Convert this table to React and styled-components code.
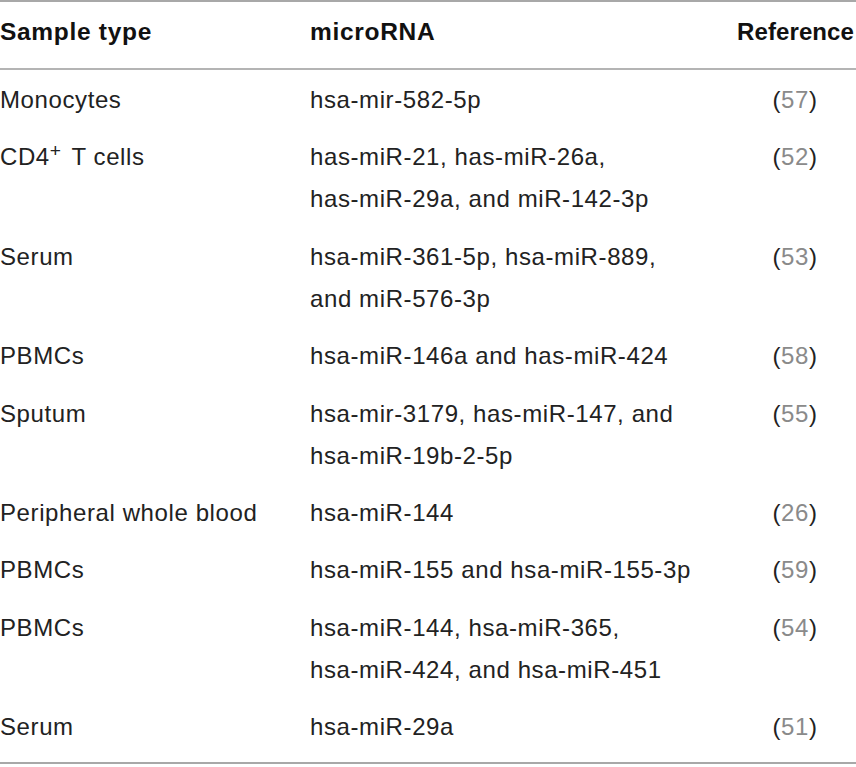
import styled, { createGlobalStyle } from "styled-components";

const GlobalStyle = createGlobalStyle`
  html, body {
    margin: 0;
    padding: 0;
    background: #ffffff;
  }
  body {
    font-family: "Liberation Sans", Arial, sans-serif;
    color: #222;
  }
`;

const StyledTable = styled.table`
  width: 856px;
  border-collapse: collapse;
  border-top: 2px solid #a8a8a8;
  border-bottom: 2px solid #a8a8a8;
  table-layout: fixed;
`;

const StyledHeadRow = styled.tr`
  border-bottom: 2px solid #b4b4b4;
`;

const StyledHeadCell = styled.th`
  padding: ${({ $align }) => ($align === "right" ? "9px 2px 15px 0" : "9px 0 15px")};
  font-size: ${({ $align }) => ($align === "right" ? "24px" : "24.5px")};
  font-weight: bold;
  letter-spacing: ${({ $align }) => ($align === "right" ? "0.1px" : "0.7px")};
  line-height: 42px;
  color: #111;
  text-align: ${({ $align }) => $align || "left"};
  white-space: nowrap;
`;

const StyledCell = styled.td`
  padding: ${({ $last }) => ($last ? "9px 0 14px" : "9px 0 6.4px")};
  font-size: 24px;
  letter-spacing: 0.6px;
  line-height: 42px;
  vertical-align: top;
  text-align: ${({ $align }) => $align || "left"};
  white-space: nowrap;
`;

const StyledSup = styled.sup`
  font-size: 0.8em;
  line-height: 0;
  vertical-align: 0.45em;
  margin-right: 3px;
`;

const StyledRef = styled.span`
  color: #8a8a8a;
`;

const rows = [
  { sample: "Monocytes", rna: ["hsa-mir-582-5p"], ref: "57" },
  {
    sample: (
      <>
        CD4<StyledSup>+</StyledSup> T cells
      </>
    ),
    rna: ["has-miR-21, has-miR-26a,", "has-miR-29a, and miR-142-3p"],
    ref: "52",
  },
  { sample: "Serum", rna: ["hsa-miR-361-5p, hsa-miR-889,", "and miR-576-3p"], ref: "53" },
  { sample: "PBMCs", rna: ["hsa-miR-146a and has-miR-424"], ref: "58" },
  { sample: "Sputum", rna: ["hsa-mir-3179, has-miR-147, and", "hsa-miR-19b-2-5p"], ref: "55" },
  { sample: "Peripheral whole blood", rna: ["hsa-miR-144"], ref: "26" },
  { sample: "PBMCs", rna: ["hsa-miR-155 and hsa-miR-155-3p"], ref: "59" },
  {
    sample: "PBMCs",
    rna: ["hsa-miR-144, hsa-miR-365,", "hsa-miR-424, and hsa-miR-451"],
    ref: "54",
  },
  { sample: "Serum", rna: ["hsa-miR-29a"], ref: "51" },
];

const App = () => {
  return (
    <>
      <GlobalStyle />
      <StyledTable>
        <colgroup>
          <col style={{ width: "310px" }} />
          <col />
          <col style={{ width: "122px" }} />
        </colgroup>
        <thead>
          <StyledHeadRow>
            <StyledHeadCell>Sample type</StyledHeadCell>
            <StyledHeadCell>microRNA</StyledHeadCell>
            <StyledHeadCell $align="right">Reference</StyledHeadCell>
          </StyledHeadRow>
        </thead>
        <tbody>
          {rows.map((row, i) => {
            const last = i === rows.length - 1;
            return (
              <tr key={i}>
                <StyledCell $last={last}>{row.sample}</StyledCell>
                <StyledCell $last={last}>
                  {row.rna.map((line, j) => (
                    <div key={j}>{line}</div>
                  ))}
                </StyledCell>
                <StyledCell $last={last} $align="center">
                  (<StyledRef>{row.ref}</StyledRef>)
                </StyledCell>
              </tr>
            );
          })}
        </tbody>
      </StyledTable>
    </>
  );
};

export default App;
